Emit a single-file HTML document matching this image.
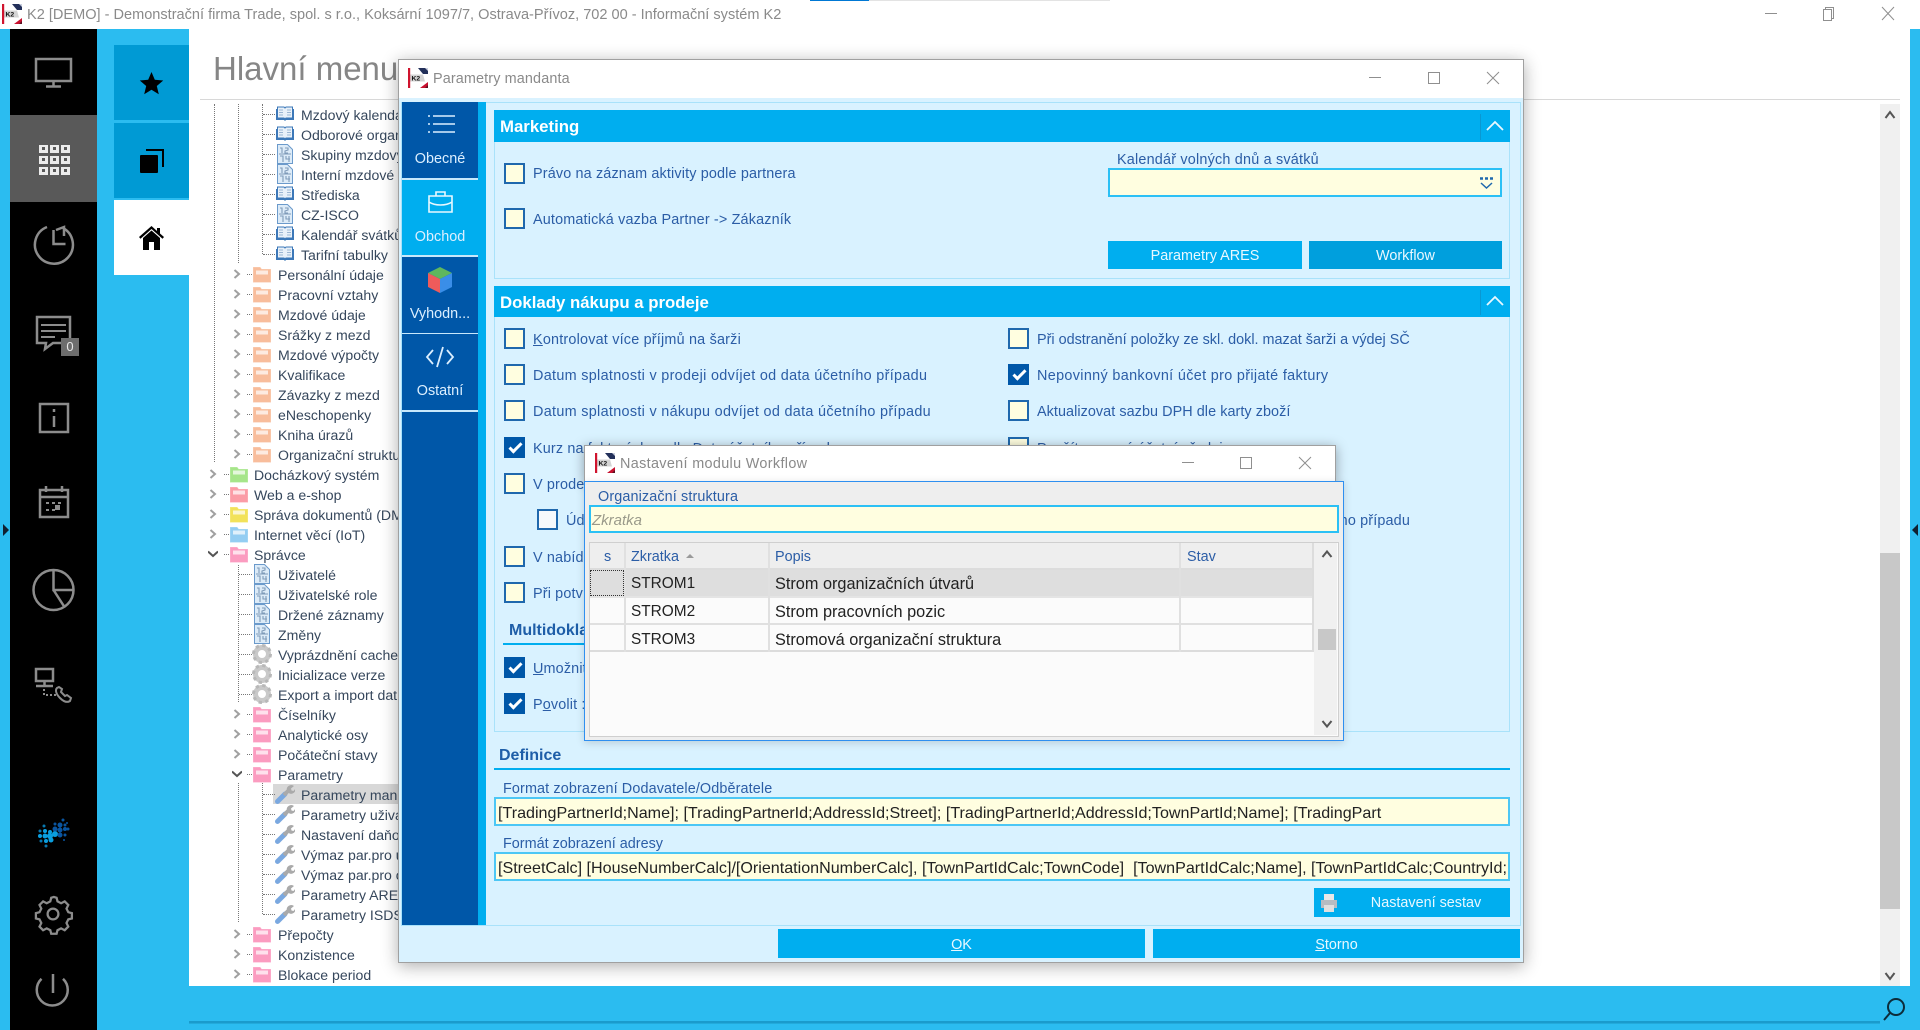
<!DOCTYPE html>
<html lang="cs"><head><meta charset="utf-8"><title>K2</title>
<style>
html,body{margin:0;padding:0;background:#fff;width:1920px;height:1030px;overflow:hidden}
body{position:relative;font-family:"Liberation Sans",sans-serif;color:#2b5da6;filter:blur(.35px)}
.a{position:absolute;white-space:nowrap;margin-top:1px}
.box{position:absolute}
.r{position:absolute;left:0;height:20px;width:400px}
.r svg{position:absolute;overflow:visible}
.r svg.i{width:20px;height:20px;top:0}
.r span{position:absolute;top:1px;line-height:20px;font-size:14.1px;color:#36475c;white-space:nowrap}
.l3 svg.i{left:275px}.l3 span{left:301px}
.l2 svg.i{left:252px}.l2 span{left:278px}
.l1 svg.i{left:229px}.l1 span{left:254px}
.l3 i,.l2 i,.l1 i{position:absolute;top:10px;height:0;border-top:1px dotted #777}
.l3 i{left:263px;width:12px}.l2 i{left:247px;width:5px}.l1 i{left:224px;width:5px}
.l2b i{left:239px;width:13px}
.l2 svg.c{left:232px;top:5px;width:10px;height:10px}
.l1 svg.c{left:208px;top:5px;width:10px;height:10px}
.pe{color:#f8bd9c}.pk{color:#fb9cc0}.gr{color:#a6e58a}.rd{color:#fb9ca6}.ye{color:#f2e25a}.bl{color:#93cdf2}
.v{position:absolute;width:0;border-left:1px dotted #777}
.cb{position:absolute;width:17px;height:17px;border:2px solid #1f68ad;background:#fffee0}
.cb.w{background:#f6f9fc}
.cb.on{background:#0057a8;border-color:#0057a8}
.cb.on:after{content:"";position:absolute;left:3px;top:4px;width:10px;height:4px;border-left:3px solid #fff;border-bottom:3px solid #fff;transform:rotate(-45deg)}
.lb{position:absolute;font-size:14.4px;line-height:20px;color:#2b5da6;white-space:nowrap;margin-top:1px;letter-spacing:.15px}
.hd{position:absolute;left:494px;width:1016px;background:#00aeef;color:#fff;font-weight:bold;font-size:16.8px}
.hd b{position:absolute;left:6px;top:7px;line-height:20px}
.pn{position:absolute;left:494px;width:1014px;border:1px solid #a9e2fa}
.btn{position:absolute;background:#00aeef;color:#e9f8ff;font-size:14.4px;text-align:center}
.tab{position:absolute;left:402px;width:76px;height:76px;background:#0057a8;color:#dcefff;font-size:14.4px;text-align:center}
.tab span{position:absolute;left:0;right:0;top:47px;line-height:20px}
.tab svg{position:absolute;left:22px;top:10px;width:32px;height:32px}
.fld{position:absolute;left:494px;width:1010px;height:25px;border:2px solid #4cc7f5;background:#fffee0;color:#222;font-size:16.1px;line-height:28px;overflow:hidden;white-space:nowrap}
.gt{position:absolute;font-size:15.4px;line-height:20px;color:#222;white-space:nowrap;margin-top:1px}
.gt.p{font-size:16.3px}
.gh{position:absolute;font-size:14.4px;line-height:20px;color:#2b5da6;white-space:nowrap;margin-top:1px}
u{text-decoration:underline}
</style></head><body>
<svg width="0" height="0" style="position:absolute">
<defs>
<symbol id="f" viewBox="0 0 20 20"><path d="M1.500 3.500h6.500l1.500 2h9v12.500h-17z" fill="currentColor" stroke="currentColor" stroke-opacity=".75"/><path d="M4 6.500h12v4H4z" fill="#fff" fill-opacity=".7"/></symbol>
<symbol id="b" viewBox="0 0 20 20"><path d="M1 5h8l1 1 1-1h8v11H11l-1 1-1-1H1z" fill="#3c78b8"/><path d="M2.500 3h6.500l1 1 1-1h6.500v11H11l-1 1-1-1H2.500z" fill="#e9f1f9" stroke="#3c78b8"/><path d="M4 6h4M4 8.500h4M4 11h4M12 6h4M12 8.500h4M12 11h4" stroke="#9cb6d2"/></symbol>
<symbol id="d" viewBox="0 0 20 20"><path d="M2.500 .5h10l5 5v14h-15z" fill="#dcebf8" stroke="#6b9acb"/><path d="M4 10h12M5 4h2v5M10 4h3v2l-3 1v2h3M5 12h3v6M11 12v3h4M14 12v6" fill="none" stroke="#7f9bb9" stroke-width="1.100"/></symbol>
<symbol id="g" viewBox="0 0 20 20"><circle cx="10" cy="10" r="6.500" fill="none" stroke="#c9c9c9" stroke-width="5"/><circle cx="10" cy="10" r="8.500" fill="none" stroke="#b8b8b8" stroke-width="3" stroke-dasharray="3.300 3.370"/><circle cx="10" cy="10" r="3" fill="#fff"/></symbol>
<symbol id="w" viewBox="0 0 20 20"><path d="M2.500 17.500L10 10" stroke="#7aa8e0" stroke-width="5" stroke-linecap="round"/><path d="M9 11l4-4" stroke="#aaa" stroke-width="4"/><path d="M12 7a4.500 4.500 0 0 1 7-5l-3 2.500 .5 2 2 .5 2-2.500a4.500 4.500 0 0 1-6 5z" fill="#aaa"/></symbol>
<symbol id="cr" viewBox="0 0 10 10"><path d="M2.500 1l4.500 4-4.500 4" fill="none" stroke="#a0a0a0" stroke-width="2"/></symbol>
<symbol id="cd" viewBox="0 0 10 10"><path d="M0 2.500l5 4.500 5-4.500" fill="none" stroke="#555" stroke-width="2"/></symbol>
<symbol id="k2" viewBox="0 0 20 20"><rect width="20" height="20" fill="#fff"/><path d="M10 0h10v6H15z" fill="#23305a"/><path d="M20 0v3l-3-3z" fill="#c9cede"/><path d="M2 6.500h13l2 7H2z" fill="#d4d4d4"/><path d="M12 20l8-6v6z" fill="#c8102e"/><path d="M17 20l3-3v3z" fill="#5a1020"/><rect x="0" y="0" width="2.200" height="20" fill="#d0142e"/><text x="3.500" y="12.500" font-size="6.800" font-weight="bold" fill="#111" font-family="Liberation Sans,sans-serif">K2</text></symbol>
</defs></svg>

<!-- title bar -->
<svg class="box" style="left:2px;top:4px;width:20px;height:20px"><use href="#k2"/></svg>
<div class="a" style="left:27px;top:4px;line-height:20px;font-size:14.55px;color:#8a8a8a">K2 [DEMO] - Demonstrační firma Trade, spol. s r.o., Koksární 1097/7, Ostrava-Přívoz, 702 00 - Informační systém K2</div>
<div class="box" style="left:810px;top:0;width:59px;height:1px;background:#0078d4"></div>
<div class="box" style="left:869px;top:0;width:241px;height:1px;background:#e3e3e3"></div>
<svg class="box" style="left:1760px;top:4px;width:140px;height:20px" fill="none" stroke="#8f8f8f">
<path d="M5 9.500h12"/><path d="M63.500 5.500h8v11h-8zM65.500 5.500v-2h8v11h-2"/><path d="M122 3l12 13M134 3l-12 13"/></svg>

<!-- left chrome -->
<div class="box" style="left:0;top:29px;width:10px;height:1001px;background:#2bbcf0"></div>
<div class="box" style="left:10px;top:29px;width:87px;height:1001px;background:#000"></div>
<div class="box" style="left:97px;top:29px;width:92px;height:1001px;background:#2bbcf0"></div>
<div class="box" style="left:10px;top:115px;width:87px;height:87px;background:#595959"></div>
<div class="box" style="left:114px;top:45px;width:75px;height:75px;background:#009ad4"></div>
<div class="box" style="left:114px;top:123px;width:75px;height:75px;background:#009ad4"></div>
<div class="box" style="left:114px;top:200px;width:75px;height:75px;background:#fff"></div>
<div class="box" style="left:1910px;top:29px;width:10px;height:1001px;background:#2bbcf0"></div>
<div class="box" style="left:189px;top:986px;width:1721px;height:44px;background:#2bbcf0"></div>
<div class="box" style="left:189px;top:1021px;width:1691px;height:2px;background:#1a9bcc"></div>
<div class="box" style="left:189px;top:1023px;width:1691px;height:1px;background:#22aadb"></div>
<svg class="box" style="left:1880px;top:994px;width:30px;height:30px" fill="none" stroke="#0d2c3a" stroke-width="2"><circle cx="16" cy="13" r="8"/><path d="M10 19l-6 7"/></svg>
<svg class="box" style="left:2px;top:523px;width:8px;height:14px"><path d="M1 1l6 6-6 6z" fill="#102030"/></svg>
<svg class="box" style="left:1911px;top:523px;width:8px;height:14px"><path d="M7 1L1 7l6 6z" fill="#102030"/></svg>

<!-- tab icons -->
<svg class="box" style="left:139px;top:71px;width:25px;height:25px"><path d="M12.500 1l3.300 7.800 8.400.7-6.400 5.500 2 8.200-7.300-4.400-7.300 4.400 2-8.200L.8 9.500l8.400-.7z" fill="#000"/></svg>
<svg class="box" style="left:140px;top:149px;width:24px;height:24px"><path d="M6 0h18v18h-2V2H6z" fill="#000"/><rect x="0" y="6" width="18" height="18" rx="1" fill="#000"/></svg>
<svg class="box" style="left:139px;top:226px;width:25px;height:24px"><path d="M12.500 0L0 11l1.500 1.700L12.500 3l11 9.700L25 11l-4-3.500V2h-3v3z" fill="#000"/><path d="M4 12l8.500-7.500L21 12v12h-6v-8h-5v8H4z" fill="#000"/></svg>

<!-- black sidebar icons -->
<svg class="box" style="left:10px;top:29px;width:87px;height:1001px" fill="none" stroke="#8c8c8c" stroke-width="2.500">
<rect x="26" y="30" width="35" height="22"/><path d="M43.500 52v5M36 57.500h15"/>
<g fill="#ececec" stroke="none"><rect x="29" y="116" width="9" height="8"/><rect x="40" y="116" width="9" height="8"/><rect x="51" y="116" width="9" height="8"/><rect x="29" y="127" width="9" height="8"/><rect x="40" y="127" width="9" height="8"/><rect x="51" y="127" width="9" height="8"/><rect x="29" y="138" width="9" height="8"/><rect x="40" y="138" width="9" height="8"/><rect x="51" y="138" width="9" height="8"/></g>
<g fill="#595959" stroke="none"><rect x="32" y="118" width="3" height="3"/><rect x="43" y="118" width="3" height="3"/><rect x="54" y="118" width="3" height="3"/><rect x="32" y="129" width="3" height="3"/><rect x="43" y="129" width="3" height="3"/><rect x="54" y="129" width="3" height="3"/><rect x="32" y="140" width="3" height="3"/><rect x="43" y="140" width="3" height="3"/><rect x="54" y="140" width="3" height="3"/></g>
<path d="M53 199a19 19 0 1 1-16-1"/><path d="M46 201l8-3v9M43.500 201v14h12"/>
<path d="M27 288h33v26H43l-8 6 1-6h-9z"/><path d="M31 296h25M31 302h25M31 308h14" stroke-width="2"/>
<rect x="30" y="375" width="28" height="28"/><path d="M44 380v3M44 387v11"/>
<rect x="30" y="461" width="28" height="27"/><path d="M30 468h28M36 457v6M52 457v6"/><path d="M36 474h3M42 474h3M48 474h3M36 481h3M42 481h3" stroke-width="2"/><rect x="45" y="476" width="5" height="5" fill="#8c8c8c" stroke="none"/>
<circle cx="43.500" cy="561" r="20"/><path d="M43.500 541v20h20M43.500 561l11 17"/>
<rect x="26" y="640" width="17" height="12"/><path d="M34.500 652v4M26 657h17"/><path d="M34 660v6h12" stroke-dasharray="2 2" stroke-width="2"/><path d="M47 659c-2 2-1 6 3 10s7 5 10 3l1-3-4-3-2 1-4-4 1-3-3-2z" stroke-width="2"/>
<g transform="translate(43 885) scale(.9) translate(-43 -895)"><path d="M44 876l3 1 1 4 4 2 4-2 4 4-2 4 2 4 4 1v6l-4 1-2 4 2 4-4 4-4-2-4 2-1 4h-6l-1-4-4-2-4 2-4-4 2-4-2-4-4-1v-6l4-1 2-4-2-4 4-4 4 2 4-2 1-4z"/><circle cx="43" cy="895" r="6"/></g>
<g transform="translate(0 3)"><path d="M31.500 946.800a15.500 15.500 0 1 0 21.500 0"/><path d="M43 942v19"/></g>
</svg>
<svg class="box" style="left:0;top:810px;width:97px;height:45px">
<g transform="translate(0 -810)" fill="#0a9fe0"><circle cx="44" cy="826" r="1.500" fill="#0878b0"/><circle cx="40" cy="831" r="1.500" fill="#0878b0"/><circle cx="45" cy="831" r="2"/><circle cx="50" cy="832" r="2"/><circle cx="40" cy="836" r="2"/><circle cx="45" cy="836" r="2.500"/><circle cx="50" cy="836" r="3"/><circle cx="55" cy="834" r="3"/><circle cx="41" cy="841" r="1.500" fill="#0878b0"/><circle cx="46" cy="841" r="2"/><circle cx="51" cy="840" r="2.500"/><circle cx="46" cy="846" r="1.500" fill="#0878b0"/>
<g fill="#0a55a0"><circle cx="55" cy="829" r="2.500"/><circle cx="60" cy="825" r="2.500"/><circle cx="60" cy="830" r="2.500"/><circle cx="65" cy="829" r="2"/><circle cx="60" cy="835" r="2.500"/><circle cx="65" cy="825" r="1.500"/><circle cx="63" cy="820" r="1.500"/><circle cx="67" cy="823" r="1"/><circle cx="68" cy="829" r="1.500"/><circle cx="65" cy="835" r="1.500"/><circle cx="64" cy="840" r="1"/><circle cx="55" cy="824" r="1.500"/></g></g>
</svg>
<div class="box" style="left:61px;top:338px;width:18px;height:18px;background:#6d6d6d;color:#e8e8e8;font-size:13px;line-height:18px;text-align:center">0</div>

<!-- main panel -->
<div class="a" style="left:213px;top:48px;font-size:33px;line-height:40px;color:#868686">Hlavní menu</div>
<div class="box" style="left:200px;top:99px;width:1700px;height:1px;background:#d8d8d8"></div>
<div class="box" style="left:1880px;top:104px;width:20px;height:882px;background:#f0f0f0"></div>
<div class="box" style="left:1880px;top:553px;width:20px;height:356px;background:#c8c8c8"></div>
<svg class="box" style="left:1884px;top:109px;width:12px;height:12px"><path d="M1.500 9L6 3l4.500 6" fill="none" stroke="#555" stroke-width="2"/></svg>
<svg class="box" style="left:1884px;top:970px;width:12px;height:12px"><path d="M1.500 3L6 9l4.500-6" fill="none" stroke="#555" stroke-width="2"/></svg>

<!-- tree -->
<div class="v" style="left:214px;top:104px;height:358px"></div>
<div class="v" style="left:238px;top:104px;height:159px"></div>
<div class="v" style="left:262px;top:104px;height:150px"></div>
<div class="v" style="left:238px;top:565px;height:137px"></div>
<div class="v" style="left:262px;top:783px;height:131px"></div>
<div class="v" style="left:238px;top:783px;height:139px"></div>
<div class="box" style="left:273px;top:784px;width:125px;height:20px;background:#d8d8d8"></div>

<div class="r l3" style="top:104px"><i></i><svg class="i"><use href="#b"/></svg><span>Mzdový kalendář</span></div>
<div class="r l3" style="top:124px"><i></i><svg class="i"><use href="#b"/></svg><span>Odborové organizace</span></div>
<div class="r l3" style="top:144px"><i></i><svg class="i"><use href="#d"/></svg><span>Skupiny mzdových</span></div>
<div class="r l3" style="top:164px"><i></i><svg class="i"><use href="#d"/></svg><span>Interní mzdové</span></div>
<div class="r l3" style="top:184px"><i></i><svg class="i"><use href="#b"/></svg><span>Střediska</span></div>
<div class="r l3" style="top:204px"><i></i><svg class="i"><use href="#d"/></svg><span>CZ-ISCO</span></div>
<div class="r l3" style="top:224px"><i></i><svg class="i"><use href="#b"/></svg><span>Kalendář svátků</span></div>
<div class="r l3" style="top:244px"><i></i><svg class="i"><use href="#b"/></svg><span>Tarifní tabulky</span></div>
<div class="r l2" style="top:264px"><svg class="c"><use href="#cr"/></svg><i></i><svg class="i pe"><use href="#f"/></svg><span>Personální údaje</span></div>
<div class="r l2" style="top:284px"><svg class="c"><use href="#cr"/></svg><i></i><svg class="i pe"><use href="#f"/></svg><span>Pracovní vztahy</span></div>
<div class="r l2" style="top:304px"><svg class="c"><use href="#cr"/></svg><i></i><svg class="i pe"><use href="#f"/></svg><span>Mzdové údaje</span></div>
<div class="r l2" style="top:324px"><svg class="c"><use href="#cr"/></svg><i></i><svg class="i pe"><use href="#f"/></svg><span>Srážky z mezd</span></div>
<div class="r l2" style="top:344px"><svg class="c"><use href="#cr"/></svg><i></i><svg class="i pe"><use href="#f"/></svg><span>Mzdové výpočty</span></div>
<div class="r l2" style="top:364px"><svg class="c"><use href="#cr"/></svg><i></i><svg class="i pe"><use href="#f"/></svg><span>Kvalifikace</span></div>
<div class="r l2" style="top:384px"><svg class="c"><use href="#cr"/></svg><i></i><svg class="i pe"><use href="#f"/></svg><span>Závazky z mezd</span></div>
<div class="r l2" style="top:404px"><svg class="c"><use href="#cr"/></svg><i></i><svg class="i pe"><use href="#f"/></svg><span>eNeschopenky</span></div>
<div class="r l2" style="top:424px"><svg class="c"><use href="#cr"/></svg><i></i><svg class="i pe"><use href="#f"/></svg><span>Kniha úrazů</span></div>
<div class="r l2" style="top:444px"><svg class="c"><use href="#cr"/></svg><i></i><svg class="i pe"><use href="#f"/></svg><span>Organizační struktura</span></div>
<div class="r l1" style="top:464px"><svg class="c"><use href="#cr"/></svg><i></i><svg class="i gr"><use href="#f"/></svg><span>Docházkový systém</span></div>
<div class="r l1" style="top:484px"><svg class="c"><use href="#cr"/></svg><i></i><svg class="i rd"><use href="#f"/></svg><span>Web a e-shop</span></div>
<div class="r l1" style="top:504px"><svg class="c"><use href="#cr"/></svg><i></i><svg class="i ye"><use href="#f"/></svg><span>Správa dokumentů (DMS)</span></div>
<div class="r l1" style="top:524px"><svg class="c"><use href="#cr"/></svg><i></i><svg class="i bl"><use href="#f"/></svg><span>Internet věcí (IoT)</span></div>
<div class="r l1" style="top:544px"><svg class="c"><use href="#cd"/></svg><i></i><svg class="i pk"><use href="#f"/></svg><span>Správce</span></div>
<div class="r l2 l2b" style="top:564px"><i></i><svg class="i"><use href="#d"/></svg><span>Uživatelé</span></div>
<div class="r l2 l2b" style="top:584px"><i></i><svg class="i"><use href="#d"/></svg><span>Uživatelské role</span></div>
<div class="r l2 l2b" style="top:604px"><i></i><svg class="i"><use href="#d"/></svg><span>Držené záznamy</span></div>
<div class="r l2 l2b" style="top:624px"><i></i><svg class="i"><use href="#d"/></svg><span>Změny</span></div>
<div class="r l2 l2b" style="top:644px"><i></i><svg class="i"><use href="#g"/></svg><span>Vyprázdnění cache</span></div>
<div class="r l2 l2b" style="top:664px"><i></i><svg class="i"><use href="#g"/></svg><span>Inicializace verze</span></div>
<div class="r l2 l2b" style="top:684px"><i></i><svg class="i"><use href="#g"/></svg><span>Export a import dat</span></div>
<div class="r l2" style="top:704px"><svg class="c"><use href="#cr"/></svg><i></i><svg class="i pk"><use href="#f"/></svg><span>Číselníky</span></div>
<div class="r l2" style="top:724px"><svg class="c"><use href="#cr"/></svg><i></i><svg class="i pk"><use href="#f"/></svg><span>Analytické osy</span></div>
<div class="r l2" style="top:744px"><svg class="c"><use href="#cr"/></svg><i></i><svg class="i pk"><use href="#f"/></svg><span>Počáteční stavy</span></div>
<div class="r l2" style="top:764px"><svg class="c"><use href="#cd"/></svg><i></i><svg class="i pk"><use href="#f"/></svg><span>Parametry</span></div>
<div class="r l3" style="top:784px"><i></i><svg class="i"><use href="#w"/></svg><span>Parametry mandanta</span></div>
<div class="r l3" style="top:804px"><i></i><svg class="i"><use href="#w"/></svg><span>Parametry uživatele</span></div>
<div class="r l3" style="top:824px"><i></i><svg class="i"><use href="#w"/></svg><span>Nastavení daňové</span></div>
<div class="r l3" style="top:844px"><i></i><svg class="i"><use href="#w"/></svg><span>Výmaz par.pro uživ</span></div>
<div class="r l3" style="top:864px"><i></i><svg class="i"><use href="#w"/></svg><span>Výmaz par.pro obj</span></div>
<div class="r l3" style="top:884px"><i></i><svg class="i"><use href="#w"/></svg><span>Parametry ARES</span></div>
<div class="r l3" style="top:904px"><i></i><svg class="i"><use href="#w"/></svg><span>Parametry ISDS</span></div>
<div class="r l2" style="top:924px"><svg class="c"><use href="#cr"/></svg><i></i><svg class="i pk"><use href="#f"/></svg><span>Přepočty</span></div>
<div class="r l2" style="top:944px"><svg class="c"><use href="#cr"/></svg><i></i><svg class="i pk"><use href="#f"/></svg><span>Konzistence</span></div>
<div class="r l2" style="top:964px"><svg class="c"><use href="#cr"/></svg><i></i><svg class="i pk"><use href="#f"/></svg><span>Blokace period</span></div>

<!-- dialog 1 -->
<div class="box" style="left:398px;top:59px;width:1124px;height:902px;background:#d9f2ff;border:1px solid #a0a0a0;box-shadow:0 3px 16px rgba(0,0,0,.32)"></div>
<div class="box" style="left:399px;top:60px;width:1124px;height:38px;background:#fff"></div>
<svg class="box" style="left:408px;top:68px;width:20px;height:20px"><use href="#k2"/></svg>
<div class="a" style="left:433px;top:68px;line-height:20px;font-size:14.4px;color:#8a8a8a;letter-spacing:.13px">Parametry mandanta</div>
<svg class="box" style="left:1365px;top:68px;width:140px;height:20px" fill="none" stroke="#8f8f8f"><path d="M4 9.500h12"/><path d="M63.500 4.500h11v11h-11z"/><path d="M122 4l12 12M134 4l-12 12"/></svg>
<div class="box" style="left:401px;top:102px;width:1118px;height:822px;border:1px solid #a9e2fa"></div>
<div class="box" style="left:402px;top:102px;width:76px;height:823px;background:#0057a8"></div>
<div class="box" style="left:478px;top:102px;width:8px;height:823px;background:#00aeef"></div>

<div class="tab" style="top:102px"><svg viewBox="0 0 32 32" fill="none" stroke="#dcefff" stroke-width="1.500"><path d="M9 4h22M9 12h22M9 20h22"/><path d="M4 4h2M4 12h2M4 20h2" stroke-dasharray="2 1"/></svg><span>Obecné</span></div>
<div class="box" style="left:402px;top:178px;width:76px;height:1.500px;background:#c8e8fb"></div>
<div class="tab" style="top:180px;background:#00aeef"><svg viewBox="0 0 32 32" fill="none" stroke="#e9f8ff" stroke-width="1.600" style="top:7px"><path d="M5 9h23v16H5zM12 9V5h9v4M5 15c6 4 17 4 23 0"/></svg><span>Obchod</span></div>
<div class="box" style="left:402px;top:255px;width:76px;height:1.500px;background:#c8e8fb"></div>
<div class="tab" style="top:257px"><svg viewBox="0 0 32 32" style="top:8px"><path d="M16 2L28 8 16 14 4 8z" fill="#5fb75d"/><path d="M4 8l12 6v14L4 22z" fill="#ef5b5b"/><path d="M28 8L16 14v14l12-6z" fill="#3a8ee8"/></svg><span>Vyhodn...</span></div>
<div class="box" style="left:402px;top:333px;width:76px;height:1.500px;background:#c8e8fb"></div>
<div class="tab" style="top:334px"><svg viewBox="0 0 32 32" fill="none" stroke="#dcefff" stroke-width="1.800" style="top:9px"><path d="M9 7l-6 7 6 7M23 7l6 7-6 7M19 4l-6 20"/></svg><span>Ostatní</span></div>
<div class="box" style="left:402px;top:410px;width:76px;height:1.500px;background:#c8e8fb"></div>

<!-- Marketing -->
<div class="pn" style="top:110px;height:167px"></div>
<div class="hd" style="top:110px;height:32px"><b>Marketing</b></div>
<div class="box" style="left:1480px;top:114px;width:1px;height:26px;background:#0a98d2"></div>
<svg class="box" style="left:1485px;top:119px;width:20px;height:14px"><path d="M2 11l8-8 8 8" fill="none" stroke="#e9f8ff" stroke-width="1.800"/></svg>
<div class="cb" style="left:504px;top:163px"></div>
<div class="lb" style="left:533px;top:163px">Právo na záznam aktivity podle partnera</div>
<div class="cb" style="left:504px;top:208px"></div>
<div class="lb" style="left:533px;top:209px;letter-spacing:.16px">Automatická vazba Partner -&gt; Zákazník</div>
<div class="lb" style="left:1117px;top:149px;letter-spacing:.2px">Kalendář volných dnů a svátků</div>
<div class="box" style="left:1108px;top:168px;width:390px;height:25px;background:#fffee0;border:2px solid #2bc0f5"></div>
<svg class="box" style="left:1479px;top:177px;width:16px;height:14px" fill="none" stroke="#1f68ad" stroke-width="1.500"><path d="M1 1.500h3M6 1.500h3M11 1.500h3" stroke-width="2.500"/><path d="M2 6l5.500 5L13 6"/></svg>
<div class="btn" style="left:1108px;top:241px;width:194px;height:28px;line-height:30px">Parametry ARES</div>
<div class="btn" style="left:1309px;top:241px;width:193px;height:28px;line-height:30px;background:#009fdd">Workflow</div>

<!-- Doklady -->
<div class="pn" style="top:286px;height:444px"></div>
<div class="hd" style="top:286px;height:31px"><b>Doklady nákupu a prodeje</b></div>
<div class="box" style="left:1480px;top:290px;width:1px;height:25px;background:#0a98d2"></div>
<svg class="box" style="left:1485px;top:294px;width:20px;height:14px"><path d="M2 11l8-8 8 8" fill="none" stroke="#e9f8ff" stroke-width="1.800"/></svg>

<div class="cb" style="left:504px;top:328px"></div><div class="lb" style="left:533px;top:329px;letter-spacing:.2px"><u>K</u>ontrolovat více příjmů na šarži</div>
<div class="cb" style="left:504px;top:364px"></div><div class="lb" style="left:533px;top:365px;letter-spacing:.31px">Datum splatnosti v prodeji odvíjet od data účetního případu</div>
<div class="cb" style="left:504px;top:400px"></div><div class="lb" style="left:533px;top:401px;letter-spacing:.31px">Datum splatnosti v nákupu odvíjet od data účetního případu</div>
<div class="cb on" style="left:504px;top:437px"></div><div class="lb" style="left:533px;top:438px">Kurz na fakturách podle Data účetního případu</div>
<div class="cb" style="left:504px;top:473px"></div><div class="lb" style="left:533px;top:474px">V prodeji odvíjet datum</div>
<div class="cb w" style="left:537px;top:509px"></div><div class="lb" style="left:566px;top:510px">Údaj</div>
<div class="lb" style="right:510px;top:510px">účetního případu</div>
<div class="cb" style="left:504px;top:546px"></div><div class="lb" style="left:533px;top:547px">V nabídce odvíjet</div>
<div class="cb" style="left:504px;top:582px"></div><div class="lb" style="left:533px;top:583px">Při potvrzení</div>
<div class="a" style="left:509px;top:620px;line-height:20px;font-size:16px;font-weight:bold;color:#1e5ea8">Multidoklady</div>
<div class="box" style="left:503px;top:643px;width:500px;height:2px;background:#00aeef"></div>
<div class="cb on" style="left:504px;top:657px"></div><div class="lb" style="left:533px;top:658px"><u>U</u>možnit</div>
<div class="cb on" style="left:504px;top:693px"></div><div class="lb" style="left:533px;top:694px">P<u>o</u>volit :</div>

<div class="cb" style="left:1008px;top:328px"></div><div class="lb" style="left:1037px;top:329px;letter-spacing:0">Při odstranění položky ze skl. dokl. mazat šarži a výdej SČ</div>
<div class="cb on" style="left:1008px;top:364px"></div><div class="lb" style="left:1037px;top:365px;letter-spacing:.34px">Nepovinný bankovní účet pro přijaté faktury</div>
<div class="cb" style="left:1008px;top:400px"></div><div class="lb" style="left:1037px;top:401px;letter-spacing:.06px">Aktualizovat sazbu DPH dle karty zboží</div>
<div class="cb" style="left:1008px;top:437px"></div><div class="lb" style="left:1037px;top:438px">Použít vzorový účetní předpis</div>

<!-- Definice -->
<div class="a" style="left:499px;top:745px;line-height:20px;font-size:16px;font-weight:bold;color:#1e5ea8">Definice</div>
<div class="box" style="left:494px;top:768px;width:1016px;height:2px;background:#00aeef"></div>
<div class="lb" style="left:503px;top:778px;letter-spacing:.12px">Format zobrazení Dodavatele/Odběratele</div>
<div class="fld" style="top:797px;padding-left:2px;">[TradingPartnerId;Name]; [TradingPartnerId;AddressId;Street]; [TradingPartnerId;AddressId;TownPartId;Name]; [TradingPart</div>
<div class="lb" style="left:503px;top:833px;letter-spacing:0">Formát zobrazení adresy</div>
<div class="fld" style="top:852px;padding-left:2px;">[StreetCalc] [HouseNumberCalc]/[OrientationNumberCalc], [TownPartIdCalc;TownCode]&nbsp; [TownPartIdCalc;Name], [TownPartIdCalc;CountryId;</div>
<div class="btn" style="left:1314px;top:888px;width:196px;height:29px;line-height:31px;padding:0;text-indent:28px">Nastavení sestav</div>
<svg class="box" style="left:1319px;top:893px;width:20px;height:20px"><path d="M5 1h10v6H5z" fill="#e8e8e8"/><path d="M2 7h16v8H2z" fill="#b6bcc2"/><path d="M5 12h10v7H5z" fill="#e0e0e0"/></svg>
<div class="btn" style="left:778px;top:929px;width:367px;height:29px;line-height:32px"><u>O</u>K</div>
<div class="btn" style="left:1153px;top:929px;width:367px;height:29px;line-height:32px"><u>S</u>torno</div>

<!-- dialog 2 -->
<div class="box" style="left:584px;top:445px;width:750px;height:36px;background:#fff;border:1px solid #a0a0a0;border-bottom:0;box-shadow:0 2px 12px rgba(0,0,0,.35)"></div>
<div class="box" style="left:584px;top:481px;width:758px;height:258px;background:#eee;border:1px solid #2f8ff0;box-shadow:0 2px 8px rgba(0,0,0,.15)"></div>
<svg class="box" style="left:595px;top:453px;width:20px;height:20px"><use href="#k2"/></svg>
<div class="a" style="left:620px;top:453px;line-height:20px;font-size:14.4px;color:#8a8a8a;letter-spacing:.34px">Nastavení modulu Workflow</div>
<svg class="box" style="left:1178px;top:453px;width:140px;height:20px" fill="none" stroke="#8f8f8f"><path d="M4 9.500h12"/><path d="M62.500 4.500h11v11h-11z"/><path d="M121 4l12 12M133 4l-12 12"/></svg>
<div class="lb" style="left:598px;top:486px;letter-spacing:.12px">Organizační struktura</div>
<div class="box" style="left:589px;top:505px;width:746px;height:24px;background:#fffee0;border:2px solid #2bc0f5"></div>
<div class="a" style="left:592px;top:510px;line-height:20px;font-size:15px;font-style:italic;color:#9a9a8a">Zkratka</div>

<div class="box" style="left:589px;top:542px;width:748px;height:193px;background:#fbfbfb;border:1px solid #cfcfcf"></div>
<div class="box" style="left:590px;top:543px;width:723px;height:26px;background:#eee"></div>
<div class="box" style="left:625px;top:569px;width:688px;height:28px;background:#dedede"></div>
<div class="box" style="left:590px;top:568px;width:723px;height:2px;background:#dcdcdc"></div>
<div class="box" style="left:590px;top:596px;width:723px;height:2px;background:#e4e4e4"></div>
<div class="box" style="left:590px;top:623px;width:723px;height:2px;background:#e0e0e0"></div>
<div class="box" style="left:590px;top:650px;width:723px;height:2px;background:#dcdcdc"></div>
<div class="box" style="left:624px;top:543px;width:2px;height:109px;background:#e0e0e0"></div>
<div class="box" style="left:768px;top:543px;width:2px;height:109px;background:#e0e0e0"></div>
<div class="box" style="left:1179px;top:543px;width:2px;height:109px;background:#e0e0e0"></div>
<div class="box" style="left:1312px;top:543px;width:2px;height:109px;background:#dcdcdc"></div>
<div class="box" style="left:590px;top:570px;width:32px;height:24px;background:#dedede;border:1px dotted #333"></div>
<div class="box" style="left:1314px;top:543px;width:23px;height:192px;background:#f0f0f0"></div>
<div class="box" style="left:1318px;top:629px;width:18px;height:21px;background:#c8c8c8"></div>
<svg class="box" style="left:1321px;top:549px;width:12px;height:10px"><path d="M1.500 8L6 2.500 10.500 8" fill="none" stroke="#555" stroke-width="2"/></svg>
<svg class="box" style="left:1321px;top:719px;width:12px;height:10px"><path d="M1.500 2L6 7.500 10.500 2" fill="none" stroke="#555" stroke-width="2"/></svg>
<div class="gh" style="left:604px;top:546px">s</div>
<div class="gh" style="left:631px;top:546px">Zkratka</div>
<svg class="box" style="left:685px;top:552px;width:10px;height:8px"><path d="M1 6l4-4 4 4z" fill="#9a9a9a"/></svg>
<div class="gh" style="left:775px;top:546px">Popis</div>
<div class="gh" style="left:1187px;top:546px">Stav</div>
<div class="gt" style="left:631px;top:573px">STROM1</div><div class="gt p" style="left:775px;top:573px">Strom organizačních útvarů</div>
<div class="gt" style="left:631px;top:601px">STROM2</div><div class="gt p" style="left:775px;top:601px">Strom pracovních pozic</div>
<div class="gt" style="left:631px;top:629px">STROM3</div><div class="gt p" style="left:775px;top:629px">Stromová organizační struktura</div>
</body></html>
